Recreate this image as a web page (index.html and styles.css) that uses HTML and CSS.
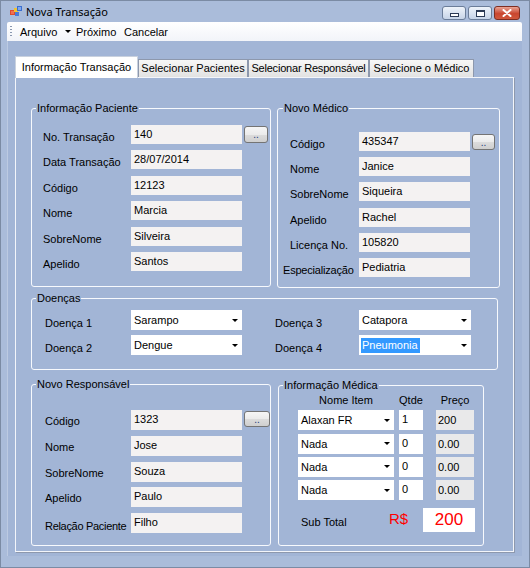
FILE: index.html
```html
<!DOCTYPE html>
<html lang="pt">
<head>
<meta charset="utf-8">
<title>Nova Transação</title>
<link rel="stylesheet" href="styles.css">
</head>
<body>
<div class="window">
  <div class="titlebar">
    <svg class="app-icon" width="12" height="12" viewBox="0 0 12 12">
      <rect x="0" y="4" width="5" height="5" fill="#e04a2c"/>
      <rect x="1" y="5" width="3" height="3" fill="#f07050"/>
      <rect x="4" y="2" width="4" height="4" fill="#f2c230"/>
      <rect x="7" y="0" width="5" height="5" fill="#3b6fd0"/>
      <rect x="8" y="1" width="3" height="3" fill="#7fa8ec"/>
      <rect x="5" y="6" width="4" height="4" fill="#4a7ad8"/>
    </svg>
    <span class="title">Nova Transação</span>
    <div class="winbtns">
      <span class="wb wb-min"><i></i></span>
      <span class="wb wb-max"><i></i></span>
      <span class="wb wb-close">
        <svg width="10" height="8" viewBox="0 0 10 8"><path d="M1.5 1 L8.5 7 M8.5 1 L1.5 7" stroke="#fff" stroke-width="2" stroke-linecap="round"/></svg>
      </span>
    </div>
  </div>

  <div class="menubar">
    <span class="grip"></span>
    <span class="mi mi-arq">Arquivo</span>
    <span class="mi-arrow"></span>
    <span class="mi mi-prox">Próximo</span>
    <span class="mi mi-canc">Cancelar</span>
  </div>

  <div class="client">
    <div class="tabs">
      <div class="tab active t1">Informação Transação</div>
      <div class="tab t2">Selecionar Pacientes</div>
      <div class="tab t3">Selecionar Responsável</div>
      <div class="tab t4">Selecione o Médico</div>
    </div>

    <div class="panel">
      <div class="row row1">
        <div class="gb gb-pac">
          <div class="gb-title">Informação Paciente</div>
          <div class="fgrid fg-pac">
            <span class="lbl">No. Transação</span><div class="tb">140</div><div class="btn">..</div>
            <span class="lbl">Data Transação</span><div class="tb">28/07/2014</div>
            <span class="lbl">Código</span><div class="tb">12123</div>
            <span class="lbl">Nome</span><div class="tb">Marcia</div>
            <span class="lbl">SobreNome</span><div class="tb">Silveira</div>
            <span class="lbl">Apelido</span><div class="tb">Santos</div>
          </div>
        </div>

        <div class="gb gb-med">
          <div class="gb-title">Novo Médico</div>
          <div class="fgrid fg-med">
            <span class="lbl">Código</span><div class="tb">435347</div><div class="btn">..</div>
            <span class="lbl">Nome</span><div class="tb">Janice</div>
            <span class="lbl">SobreNome</span><div class="tb">Siqueira</div>
            <span class="lbl">Apelido</span><div class="tb">Rachel</div>
            <span class="lbl">Licença No.</span><div class="tb">105820</div>
            <span class="lbl lbl-esp">Especialização</span><div class="tb">Pediatria</div>
          </div>
        </div>
      </div>

      <div class="row row2">
        <div class="gb gb-doe">
          <div class="gb-title">Doenças</div>
          <div class="fgrid fg-doe">
            <span class="lbl">Doença 1</span>
            <div class="combo"><span>Sarampo</span><i class="arrow"></i></div>
            <span class="lbl">Doença 3</span>
            <div class="combo"><span>Catapora</span><i class="arrow"></i></div>
            <span class="lbl">Doença 2</span>
            <div class="combo"><span>Dengue</span><i class="arrow"></i></div>
            <span class="lbl">Doença 4</span>
            <div class="combo"><span class="sel">Pneumonia</span><i class="arrow"></i></div>
          </div>
        </div>
      </div>

      <div class="row row3">
        <div class="gb gb-resp">
          <div class="gb-title">Novo Responsável</div>
          <div class="fgrid fg-resp">
            <span class="lbl">Código</span><div class="tb">1323</div><div class="btn">..</div>
            <span class="lbl">Nome</span><div class="tb">Jose</div>
            <span class="lbl">SobreNome</span><div class="tb">Souza</div>
            <span class="lbl">Apelido</span><div class="tb">Paulo</div>
            <span class="lbl lbl-rel">Relação Paciente</span><div class="tb">Filho</div>
          </div>
        </div>

        <div class="gb gb-info">
          <div class="gb-title">Informação Médica</div>
          <div class="fg-info">
            <span class="hd hd-item">Nome Item</span>
            <span class="hd hd-qt">Qtde</span>
            <span class="hd hd-pr">Preço</span>

            <div class="combo c-item"><span>Alaxan FR</span><i class="arrow"></i></div>
            <div class="qt">1</div>
            <div class="pr">200</div>

            <div class="combo c-item"><span>Nada</span><i class="arrow"></i></div>
            <div class="qt">0</div>
            <div class="pr">0.00</div>

            <div class="combo c-item"><span>Nada</span><i class="arrow"></i></div>
            <div class="qt">0</div>
            <div class="pr">0.00</div>

            <div class="combo c-item"><span>Nada</span><i class="arrow"></i></div>
            <div class="qt">0</div>
            <div class="pr">0.00</div>
          </div>
          <div class="subtotal">
            <span class="st-lbl">Sub Total</span>
            <span class="st-cur">R$</span>
            <div class="st-val">200</div>
          </div>
        </div>
      </div>
    </div>
  </div>
</div>
</body>
</html>
```
FILE: styles.css
```css
* { box-sizing: border-box; }

body {
  margin: 0;
  font-family: "Liberation Sans", Arial, sans-serif;
  font-size: 11px;
  color: #000;
  background: #fff;
}

.window {
  width: 530px;
  height: 568px;
  border: 1px solid #7b8ba4;
  background: #aabcda;
  display: flex;
  flex-direction: column;
}

/* title bar */
.titlebar {
  height: 21px;
  flex: none;
  display: flex;
  align-items: center;
  padding-left: 9px;
}
.app-icon { flex: none; margin-top: 1px; }
.title {
  font-family: "Noto Sans", "Liberation Sans", sans-serif;
  font-size: 11px;
  margin-left: 4px;
  color: #000;
}
.winbtns {
  margin-left: auto;
  margin-right: 9px;
  align-self: flex-start;
  margin-top: 5px;
  display: flex;
  gap: 2px;
}
.wb {
  width: 24px;
  height: 14px;
  border: 1px solid #6b7d99;
  border-radius: 3px;
  background: linear-gradient(#eef3fa, #c7d4e8);
  display: flex;
  align-items: center;
  justify-content: center;
}
.wb-min i {
  width: 9px;
  height: 4px;
  border: 1px solid #2c3a55;
  background: #fff;
  margin-top: 4px;
}
.wb-max i {
  width: 9px;
  height: 7px;
  border: 1px solid #2c3a55;
  border-top-width: 2px;
  background: #fff;
}
.wb-close {
  width: 26px;
  border-color: #7e2e22;
  background: linear-gradient(#eaa596, #c9462f 55%, #d0573c);
}

/* menu bar */
.menubar {
  height: 19px;
  flex: none;
  margin: 0 7px 0 6px;
  background: linear-gradient(#ffffff, #f2f4f9);
  border-radius: 2px 2px 0 0;
  display: flex;
  align-items: center;
  white-space: nowrap;
}
.grip {
  width: 2px;
  height: 12px;
  margin-left: 3px;
  background: repeating-linear-gradient(#8a98b0 0 1px, transparent 1px 3px);
}
.mi-arq { margin-left: 8px; width: 44px; }
.mi-arrow {
  width: 0;
  height: 0;
  margin-left: 1px;
  border-left: 3px solid transparent;
  border-right: 3px solid transparent;
  border-top: 3px solid #000;
}
.mi-prox { margin-left: 5px; width: 48px; }
.mi-canc { margin-left: 0; }

/* client area */
.client {
  flex: 1;
  margin: 0 7px 11px 6px;
  background: #a2b5d6;
  padding: 15px 0 0 7px;
  border-left: 1px solid #bccae2;
}

.tabs {
  display: flex;
  align-items: flex-end;
  height: 21px;
}
.tab {
  height: 18px;
  border: 1px solid #8d98ad;
  border-bottom: none;
  background: linear-gradient(#f7f7f7, #e2e2e2);
  text-align: center;
  line-height: 17px;
  white-space: nowrap;
}
.tab.active {
  height: 22px;
  margin-bottom: -1px;
  background: #fff;
  border-color: #c9d1de;
  line-height: 20px;
  position: relative;
  z-index: 1;
}
.t1 { width: 123px; }
.t2 { width: 110px; }
.t3 { width: 121px; letter-spacing: -0.2px; }
.t4 { width: 105px; }

.panel {
  width: 499px;
  height: 475px;
  border: 1px solid #f3f5fa;
  box-shadow: 1px 1px 0 #8d98ad;
  padding: 30px 0 0 15px;
}

.row {
  display: flex;
  align-items: flex-start;
}
.row1 { gap: 6px; }
.row2 { margin-top: 10px; }
.row3 { margin-top: 14px; gap: 7px; }

/* group boxes */
.gb {
  border: 1px solid #f7f9fd;
  border-radius: 3px;
}
.gb-title {
  width: fit-content;
  margin: -8px 0 0 4px;
  padding: 0 1px;
  line-height: 14px;
  background: #a2b5d6;
  white-space: nowrap;
}
.gb-pac { width: 240px; height: 179px; }
.gb-med { width: 223px; height: 180px; }
.gb-med .gb-title { margin-left: 5px; }
.gb-doe { width: 467px; height: 72px; }
.gb-resp { width: 240px; height: 162px; }
.gb-info { width: 206px; height: 161px; margin-top: 1px; }
.gb-info .gb-title { margin-left: 4px; }

.fgrid {
  display: grid;
  column-gap: 2px;
}
.fgrid .lbl { grid-column: 1; white-space: nowrap; line-height: 14px; }
.fgrid .tb { grid-column: 2; }
.fgrid .btn { grid-column: 3; }

.fg-pac {
  padding: 10px 0 0 11px;
  grid-template-columns: 86px 111px 24px;
  grid-auto-rows: 19px;
  row-gap: 6.4px;
}
.fg-pac .lbl { padding-top: 5px; }
.fg-pac .btn { height: 17px; align-self: center; }

.fg-med {
  padding: 17px 0 0 12px;
  grid-template-columns: 67px 111px 23px;
  grid-auto-rows: 19px;
  row-gap: 6.2px;
}
.fg-med .lbl { padding-top: 5px; }
.fg-med .btn { height: 16px; align-self: center; }
.lbl-esp { margin-left: -7px; letter-spacing: -0.2px; }

.fg-doe {
  padding: 5px 0 0 13px;
  grid-template-columns: 86px 144px 84px 112px;
  grid-auto-rows: 20px;
  row-gap: 5px;
  column-gap: 0;
}
.fg-doe .lbl { grid-column: auto; padding-top: 6px; }
.fg-doe .combo:nth-child(2), .fg-doe .combo:nth-child(6) { width: 111px; }

.fg-resp {
  padding: 19px 0 0 13px;
  grid-template-columns: 84px 111px 26px;
  grid-auto-rows: 20px;
  row-gap: 5.75px;
}
.fg-resp .lbl { padding-top: 4px; }
.fg-resp .lbl-rel { padding-top: 6px; letter-spacing: -0.3px; }
.fg-resp .btn { height: 16px; margin-top: 1px; }

/* controls */
.tb {
  background: #f4f2f2;
  padding: 1px 0 0 3px;
  line-height: 16px;
  white-space: nowrap;
  overflow: hidden;
}
.btn {
  border: 1px solid #747474;
  border-radius: 3px;
  background: linear-gradient(#f6f6f6 0%, #ebebeb 50%, #dcdcdc 51%, #cfcfcf 100%);
  text-align: center;
  font-size: 10px;
  line-height: 15px;
  color: #1a3a7a;
}
.combo {
  background: #fff;
  display: flex;
  align-items: center;
  padding: 0 4px 0 3px;
  white-space: nowrap;
}
.combo .arrow {
  margin-left: auto;
  width: 0;
  height: 0;
  border-left: 3px solid transparent;
  border-right: 3px solid transparent;
  border-top: 3px solid #000;
}
.combo .sel {
  background: #3399ff;
  color: #fff;
  line-height: 15px;
  padding-right: 2px;
  margin-left: -1px;
  padding-left: 1px;
}

/* medical info */
.fg-info {
  display: grid;
  padding: 1px 0 0 19px;
  grid-template-columns: 101px 37px 38px;
  grid-template-rows: 14px repeat(4, 20px);
  row-gap: 3.3px;
}
.hd { line-height: 14px; text-align: center; white-space: nowrap; }
.hd-item { width: 96px; }
.hd-qt { width: 24px; display: flex; justify-content: center; }
.hd-pr { width: 38px; }
.c-item { width: 96px; }
.qt {
  width: 24px;
  background: #fff;
  padding: 1px 0 0 3px;
  line-height: 16px;
}
.pr {
  width: 38px;
  background: #e9e9ea;
  padding-left: 2px;
  line-height: 20px;
}

.subtotal {
  display: flex;
  align-items: center;
  margin-top: 8px;
  padding-left: 19px;
}
.st-lbl {
  width: 91px;
  padding-left: 3px;
  margin-top: 4px;
  white-space: nowrap;
}
.st-cur {
  width: 34px;
  color: #ff0000;
  font-size: 15px;
  margin-bottom: 4px;
}
.st-val {
  width: 52px;
  height: 24px;
  background: #fff;
  color: #ff0000;
  font-size: 17px;
  line-height: 24px;
  text-align: center;
}
```
